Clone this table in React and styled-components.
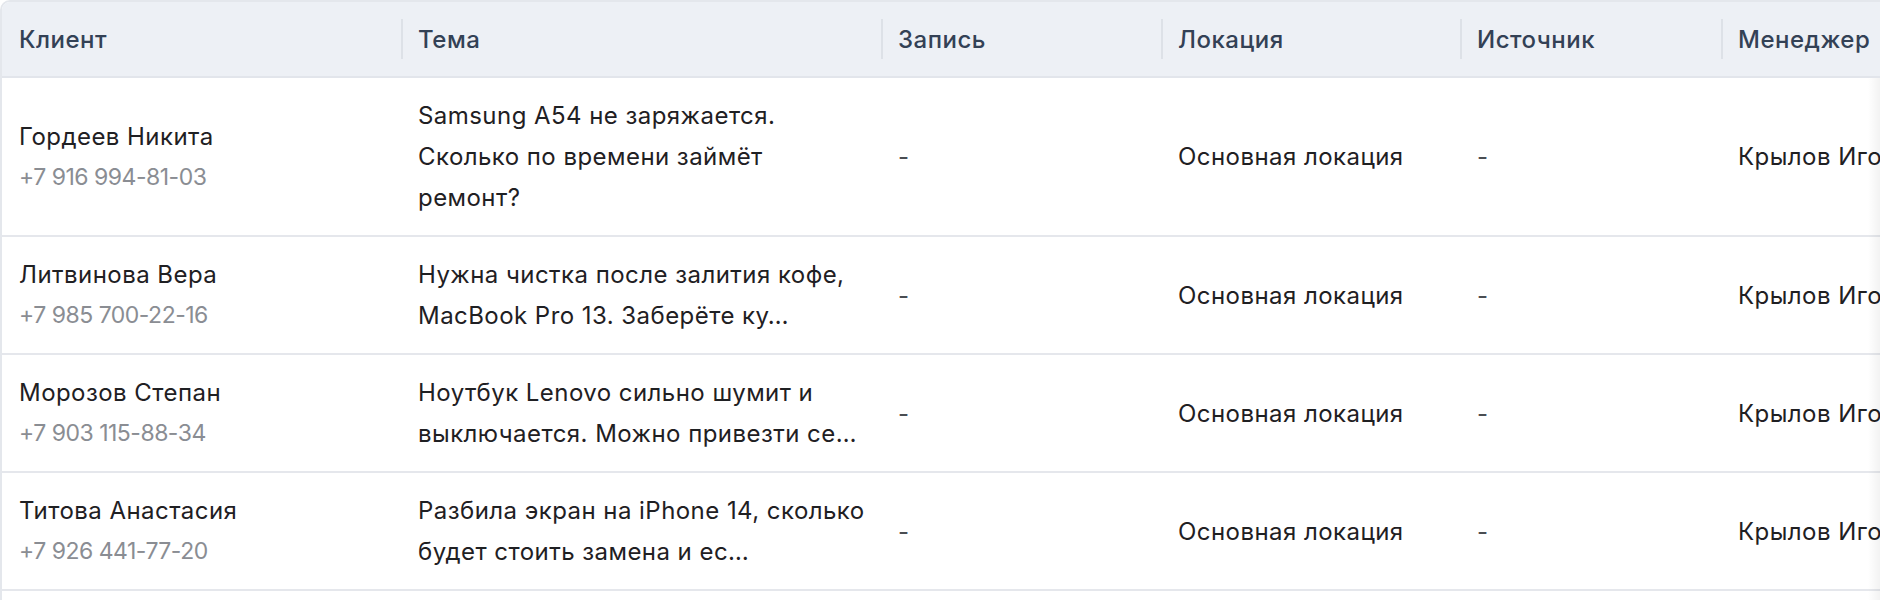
import styled, { createGlobalStyle } from "styled-components";

const GlobalStyle = createGlobalStyle`
  html, body {
    margin: 0;
    padding: 0;
    background: #ffffff;
    overflow: hidden;
  }
  body {
    font-family: Inter, "Noto Sans", "Liberation Sans", sans-serif;
  }
`;

const COLUMNS = "399px 480px 280px 299px 261px 300px";

const rows = [
  {
    name: "Гордеев Никита",
    phone: "+7 916 994-81-03",
    topic: "Samsung A54 не заряжается.\nСколько по времени займёт\nремонт?",
    record: "-",
    location: "Основная локация",
    source: "-",
    manager: "Крылов Игорь",
  },
  {
    name: "Литвинова Вера",
    phone: "+7 985 700-22-16",
    topic: "Нужна чистка после залития кофе, MacBook Pro 13. Заберёте ку…",
    record: "-",
    location: "Основная локация",
    source: "-",
    manager: "Крылов Игорь",
  },
  {
    name: "Морозов Степан",
    phone: "+7 903 115-88-34",
    topic: "Ноутбук Lenovo сильно шумит и выключается. Можно привезти се…",
    record: "-",
    location: "Основная локация",
    source: "-",
    manager: "Крылов Игорь",
  },
  {
    name: "Титова Анастасия",
    phone: "+7 926 441-77-20",
    topic: "Разбила экран на iPhone 14, сколько будет стоить замена и ес…",
    record: "-",
    location: "Основная локация",
    source: "-",
    manager: "Крылов Игорь",
  },
];

const headers = ["Клиент", "Тема", "Запись", "Локация", "Источник", "Менеджер"];

function App() {
  return (
    <>
      <GlobalStyle />
      <Viewport>
        <TableBox>
          <HeadRow>
            {headers.map((h, i) => (
              <HeadCell key={h} $divider={i > 0}>
                {h}
              </HeadCell>
            ))}
          </HeadRow>
          {rows.map((r, idx) => (
            <Row key={idx}>
              <Cell>
                <Name>{r.name}</Name>
                <Phone>{r.phone}</Phone>
              </Cell>
              <Cell $tight>
                <Topic>{r.topic}</Topic>
              </Cell>
              <Cell $muted>{r.record}</Cell>
              <Cell>{r.location}</Cell>
              <Cell $muted>{r.source}</Cell>
              <Cell $nowrap>{r.manager}</Cell>
            </Row>
          ))}
        </TableBox>
        <EdgeShade />
      </Viewport>
    </>
  );
}

const Viewport = styled.div`
  position: relative;
  width: 1880px;
  height: 600px;
  overflow: hidden;
`;

const TableBox = styled.div`
  width: 2100px;
  min-height: 660px;
  border: 2px solid #e4e7ec;
  border-radius: 10px;
  background: #ffffff;
  overflow: hidden;
`;

const HeadRow = styled.div`
  display: grid;
  grid-template-columns: ${COLUMNS};
  height: 74px;
  background: #edf0f5;
  border-bottom: 2px solid #e2e5eb;
`;

const HeadCell = styled.div`
  position: relative;
  display: flex;
  align-items: center;
  padding-left: 17px;
  font-size: 24px;
  font-weight: 500;
  letter-spacing: 0.5px;
  color: #334155;

  &::before {
    content: "";
    display: ${(p) => (p.$divider ? "block" : "none")};
    position: absolute;
    left: 0;
    top: 17px;
    width: 2px;
    height: 40px;
    background: #dde1e7;
  }
`;

const Row = styled.div`
  display: grid;
  grid-template-columns: ${COLUMNS};
  border-bottom: 2px solid #e5e7ec;
`;

const Cell = styled.div`
  display: flex;
  flex-direction: column;
  justify-content: center;
  padding: 17px ${(p) => (p.$tight ? "0" : "16px")} 17px 17px;
  font-size: 24px;
  letter-spacing: 0.45px;
  line-height: 41px;
  color: ${(p) => (p.$muted ? "#4a4d52" : "#1f2023")};
  white-space: ${(p) => (p.$nowrap ? "nowrap" : "normal")};
`;

const Name = styled.div`
  color: #1f2023;
`;

const Phone = styled.div`
  color: #8a8d93;
  font-size: 23px;
  letter-spacing: -0.5px;
`;

const Topic = styled.div`
  white-space: pre-line;
`;

const EdgeShade = styled.div`
  position: absolute;
  top: 78px;
  right: 0;
  bottom: 0;
  width: 12px;
  background: linear-gradient(to right, rgba(0, 0, 0, 0), rgba(0, 0, 0, 0.05));
  pointer-events: none;
`;

export default App;
